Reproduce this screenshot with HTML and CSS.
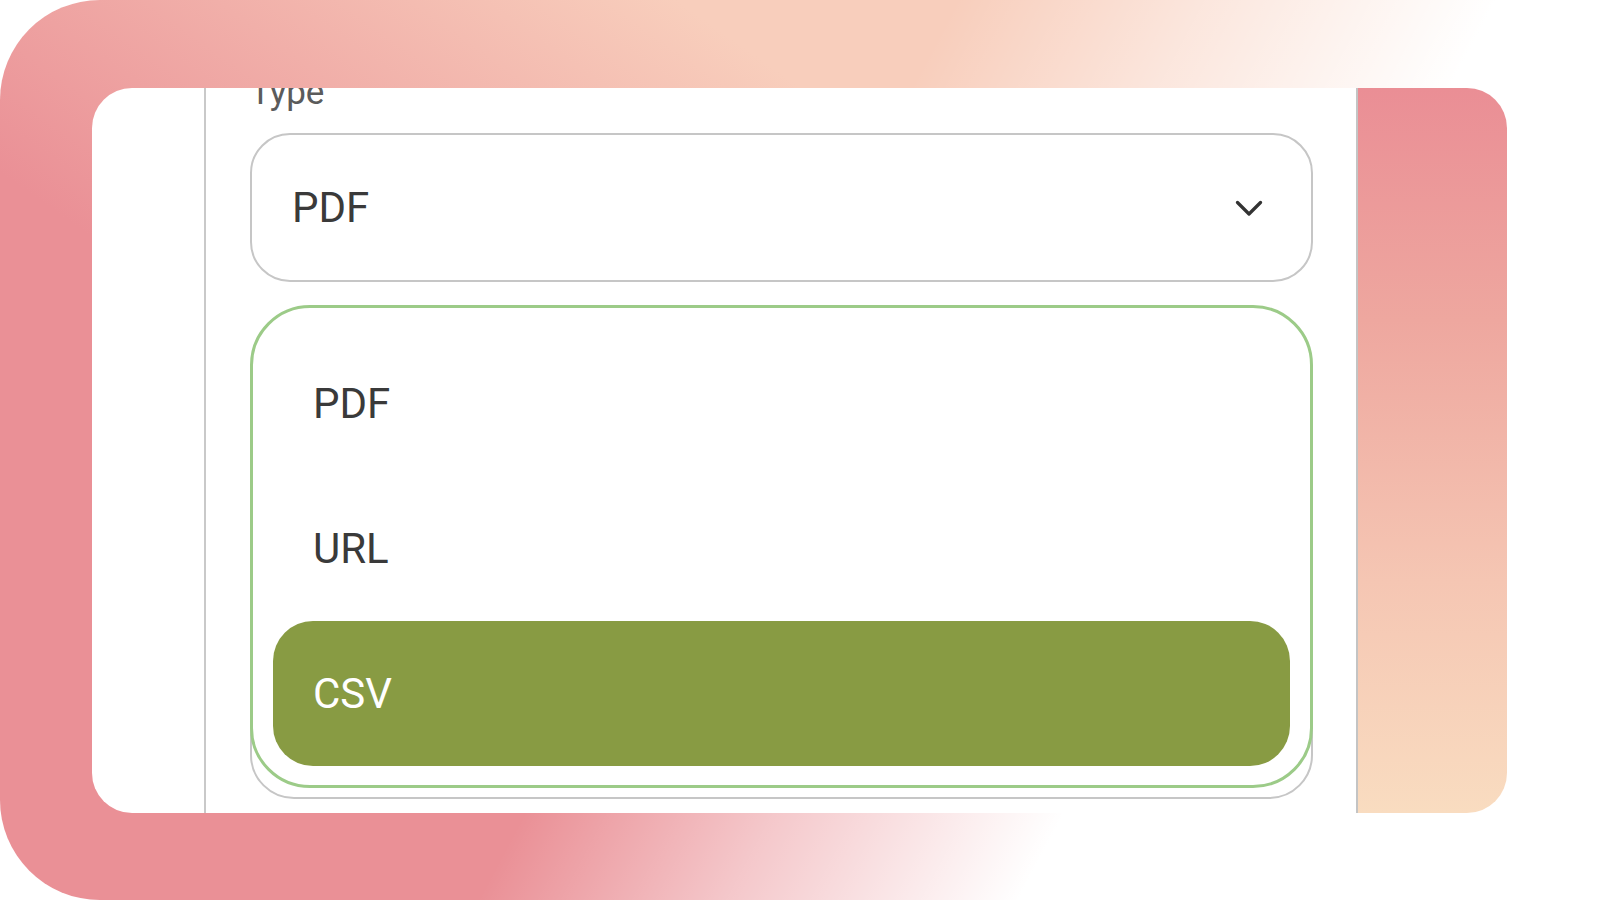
FILE: index.html
```html
<!DOCTYPE html>
<html lang="en">
<head>
<meta charset="utf-8">
<title>Type</title>
<link rel="stylesheet" href="styles.css">
</head>
<body>
<div class="frame">
  <div class="card">
    <aside class="rail"></aside>
    <main class="form">
      <div class="label">Type</div>
      <div class="select">
        <span class="select-value">PDF</span>
        <svg class="chevron" width="28" height="16" viewBox="0 0 28 16" aria-hidden="true">
          <path d="M2.5 2.5 L14 14 L25.5 2.5" fill="none" stroke="#333" stroke-width="3.2" stroke-linecap="round" stroke-linejoin="round"/>
        </svg>
      </div>
      <div class="field"></div>
      <ul class="menu">
        <li class="option">PDF</li>
        <li class="option">URL</li>
        <li class="option is-selected">CSV</li>
      </ul>
    </main>
    <div class="backdrop"></div>
  </div>
</div>
</body>
</html>
```

FILE: styles.css
```css
html, body {
  margin: 0;
  padding: 0;
  background: #ffffff;
}

body {
  font-family: Roboto, "Liberation Sans", sans-serif;
  width: 1600px;
  height: 900px;
  overflow: hidden;
}

.frame {
  width: 1600px;
  height: 900px;
  box-sizing: border-box;
  padding: 88px 93px 87px 92px;
  border-radius: 100px;
  display: flex;
  background:
    linear-gradient(118deg, rgba(255, 255, 255, 0) 46%, rgba(255, 255, 255, 0.5) 58%, #ffffff 72%),
    linear-gradient(35deg, #ea9096 36%, #f8cebc 68%);
}

.card {
  flex: 1;
  display: flex;
  background: #ffffff;
  border-radius: 40px;
  overflow: hidden;
}

.rail {
  flex: none;
  width: 112px;
  border-right: 2px solid #c9c9c9;
}

.form {
  flex: 1;
  position: relative;
  padding: 0 43px 0 44px;
  border-right: 2px solid #c4c4c4;
}

.label {
  margin-top: -15px;
  font-size: 35px;
  line-height: 40px;
  color: #5b5b5b;
}

.select {
  margin-top: 20px;
  height: 149px;
  box-sizing: border-box;
  border: 2px solid #c6c6c6;
  border-radius: 40px;
  display: flex;
  align-items: center;
  justify-content: space-between;
  padding: 0 48px 0 40px;
  font-size: 42px;
  line-height: 50px;
  color: #3a3a3a;
}

.chevron {
  display: block;
  flex: none;
}

.field {
  margin-top: 118px;
  height: 399px;
  box-sizing: border-box;
  border: 2px solid #c6c6c6;
  border-radius: 44px;
}

.menu {
  position: absolute;
  top: 217px;
  left: 44px;
  right: 43px;
  margin: 0;
  list-style: none;
  padding: 23px 20px 19px;
  border: 3px solid #9ccb88;
  border-radius: 60px;
  background: #ffffff;
}

.option {
  height: 145px;
  display: flex;
  align-items: center;
  padding-left: 40px;
  border-radius: 40px;
  font-size: 42px;
  line-height: 50px;
  color: #3a3a3a;
}

.option.is-selected {
  background: #889b43;
  color: #ffffff;
}

.backdrop {
  flex: none;
  width: 149px;
  background: linear-gradient(to bottom, #ea8e95 0%, #eea79f 32%, #f5c6b3 68%, #f9dcc0 100%);
}
```
